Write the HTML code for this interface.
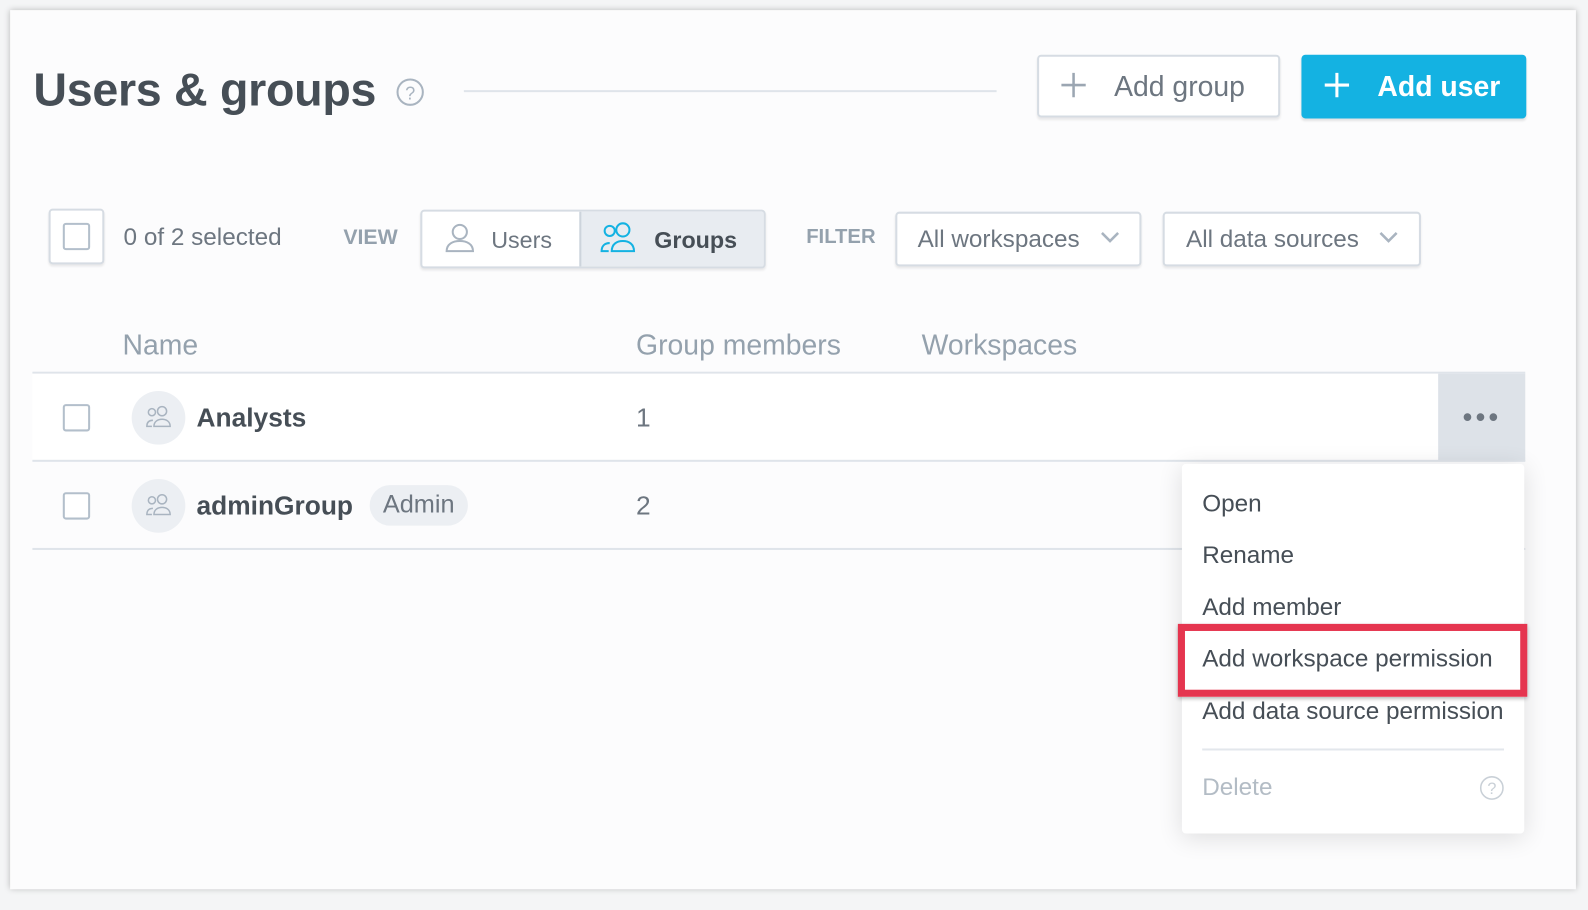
<!DOCTYPE html>
<html><head><style>
*{box-sizing:border-box;margin:0;padding:0}
body{width:1588px;height:898px;background:#f4f5f6;font-family:"Liberation Sans",sans-serif;position:relative;overflow:hidden;color:#464e56}
#w{position:absolute;left:0;top:0;width:1588px;height:898px;transform:scale(1.0128);transform-origin:0 0}
.frame{position:absolute;left:10px;top:10px;width:1546px;height:868px;background:#fcfcfd;box-shadow:0 0 6px rgba(0,0,0,.25)}
.a{position:absolute}
.t{position:absolute;white-space:nowrap}
.btn{position:absolute;border:2px solid #d6dce3;border-radius:4px;background:#fff;box-shadow:0 2px 2px rgba(0,0,0,.08)}
.cb{position:absolute;width:27px;height:27px;border:2px solid #b3bfcb;border-radius:3px;background:#fff}
.mi{position:absolute;left:1187px;font-size:24px;color:#464e56}
</style></head><body><div id="w">
<div class="frame"></div>
<div class="t" style="left:33px;top:61px;font-size:46px;font-weight:bold;color:#464e56;letter-spacing:-0.3px">Users &amp; groups</div>
<svg class="a" style="left:390px;top:76px" width="30" height="30"><circle cx="15" cy="15" r="12.5" fill="none" stroke="#a9b4c0" stroke-width="2"/><text x="15" y="22" text-anchor="middle" font-family="Liberation Sans" font-size="18" fill="#a9b4c0">?</text></svg>
<div class="a" style="left:458px;top:89px;width:526px;height:2px;background:#dfe4ea"></div>
<div class="btn" style="left:1024px;top:54px;width:240px;height:62px"></div>
<svg class="a" style="left:1036px;top:60px" width="48" height="48" stroke="#9ba6b2" stroke-width="2.5"><path d="M24 12v24M12 24h24"/></svg>
<div class="t" style="left:1100px;top:70px;font-size:28px;color:#6d7680">Add group</div>
<div class="a" style="left:1285px;top:54px;width:222px;height:63px;background:#14b2e2;border-radius:4px;box-shadow:0 2px 2px rgba(0,0,0,.1)"></div>
<svg class="a" style="left:1296px;top:60px" width="48" height="48" stroke="#fff" stroke-width="3"><path d="M24 12v24M12 24h24"/></svg>
<div class="t" style="left:1360px;top:70px;font-size:28px;font-weight:bold;color:#fff">Add user</div>

<div class="btn" style="left:48px;top:206px;width:55px;height:55px"></div>
<div class="cb" style="left:62px;top:220px"></div>
<div class="t" style="left:122px;top:221px;font-size:24px;color:#6d7680">0 of 2 selected</div>
<div class="t" style="left:339px;top:223px;font-size:21px;font-weight:bold;color:#94a1ad">VIEW</div>
<div class="btn" style="left:415px;top:207px;width:341px;height:58px;overflow:hidden"><div class="a" style="left:155px;top:0;width:186px;height:58px;background:#e8ecf1;border-left:2px solid #cdd4dc"></div></div>
<svg class="a" style="left:438px;top:219px" width="32" height="32" fill="none" stroke="#a9b4c0" stroke-width="2"><circle cx="16" cy="10" r="7"/><path d="M3 29c0-7 6-10 13-10s13 3 13 10z"/></svg>
<div class="t" style="left:485px;top:224px;font-size:23px;color:#6d7680">Users</div>
<svg class="a" style="left:592px;top:219px" width="38" height="32" fill="none" stroke="#14b2e2" stroke-width="2"><circle cx="10" cy="9" r="5"/><circle cx="23" cy="8" r="6.5"/><path d="M12 29c0-7 5-10 11-10s11 3 11 10z"/><path d="M9 29H2c0-5 3-8 8-8"/></svg>
<div class="t" style="left:646px;top:224px;font-size:23px;font-weight:bold;color:#464e56">Groups</div>
<div class="t" style="left:796px;top:223px;font-size:20px;font-weight:bold;color:#94a1ad">FILTER</div>
<div class="btn" style="left:884px;top:209px;width:243px;height:54px"></div>
<div class="t" style="left:906px;top:223px;font-size:24px;color:#6d7680">All workspaces</div>
<svg class="a" style="left:1086px;top:228px" width="20" height="14" fill="none" stroke="#a9b4c0" stroke-width="2.5"><path d="M2 2l8 8 8-8"/></svg>
<div class="btn" style="left:1148px;top:209px;width:255px;height:54px"></div>
<div class="t" style="left:1171px;top:223px;font-size:24px;color:#6d7680">All data sources</div>
<svg class="a" style="left:1361px;top:228px" width="20" height="14" fill="none" stroke="#a9b4c0" stroke-width="2.5"><path d="M2 2l8 8 8-8"/></svg>

<div class="t" style="left:121px;top:325px;font-size:28px;color:#94a1ad">Name</div>
<div class="t" style="left:628px;top:325px;font-size:28px;color:#94a1ad">Group members</div>
<div class="t" style="left:910px;top:325px;font-size:28px;color:#94a1ad">Workspaces</div>
<div class="a" style="left:32px;top:367px;width:1474px;height:2px;background:#dfe4ea"></div>
<div class="a" style="left:32px;top:369px;width:1388px;height:86px;background:#fff"></div>
<div class="a" style="left:1420px;top:369px;width:86px;height:86px;background:#dde2e8"></div>
<div class="t" style="left:1444px;top:396px;font-size:28px;color:#6d7680;letter-spacing:3px">•••</div>
<div class="a" style="left:32px;top:454px;width:1474px;height:2px;background:#dfe4ea"></div>
<div class="a" style="left:32px;top:541px;width:1474px;height:2px;background:#dfe4ea"></div>

<div class="cb" style="left:62px;top:399px"></div>
<div class="a" style="left:130px;top:386px;width:53px;height:53px;border-radius:50%;background:#eceff3"></div>
<svg class="a" style="left:142px;top:400px" width="30" height="24" fill="none" stroke="#a9b4c0" stroke-width="1.5"><circle cx="8" cy="7" r="3.5"/><circle cx="18" cy="6" r="4.5"/><path d="M10 21c0-5 4-7 8-7s8 2 8 7z"/><path d="M8 21H3c0-4 2-6 6-6"/></svg>
<div class="t" style="left:194px;top:397px;font-size:26px;font-weight:bold;color:#464e56">Analysts</div>
<div class="t" style="left:628px;top:397px;font-size:26px;color:#6d7680">1</div>

<div class="cb" style="left:62px;top:486px"></div>
<div class="a" style="left:130px;top:473px;width:53px;height:53px;border-radius:50%;background:#eceff3"></div>
<svg class="a" style="left:142px;top:487px" width="30" height="24" fill="none" stroke="#a9b4c0" stroke-width="1.5"><circle cx="8" cy="7" r="3.5"/><circle cx="18" cy="6" r="4.5"/><path d="M10 21c0-5 4-7 8-7s8 2 8 7z"/><path d="M8 21H3c0-4 2-6 6-6"/></svg>
<div class="t" style="left:194px;top:484px;font-size:26px;font-weight:bold;color:#464e56">adminGroup</div>
<div class="a" style="left:365px;top:479px;width:97px;height:40px;border-radius:20px;background:#eceff3"></div>
<div class="t" style="left:378px;top:484px;font-size:25px;color:#6d7680">Admin</div>
<div class="t" style="left:628px;top:484px;font-size:26px;color:#6d7680">2</div>

<div class="a" style="left:1167px;top:458px;width:338px;height:365px;background:#fff;border-radius:4px;box-shadow:0 4px 24px rgba(0,0,0,.12)"></div>
<div class="mi" style="top:484px">Open</div>
<div class="mi" style="top:535px">Rename</div>
<div class="mi" style="top:586px">Add member</div>
<div class="a" style="left:1163px;top:616px;width:345px;height:72px;border:7px solid #e5354f;box-shadow:0 2px 4px rgba(0,0,0,.3)"></div>
<div class="mi" style="top:637px">Add workspace permission</div>
<div class="mi" style="top:689px">Add data source permission</div>
<div class="a" style="left:1187px;top:739px;width:298px;height:2px;background:#e3e7ec"></div>
<div class="mi" style="top:764px;color:#b3bcc5">Delete</div>
<svg class="a" style="left:1460px;top:765px" width="26" height="26"><circle cx="13" cy="13" r="11" fill="none" stroke="#c9d0d7" stroke-width="1.5"/><text x="13" y="19" text-anchor="middle" font-family="Liberation Sans" font-size="16" fill="#c9d0d7">?</text></svg>
</div></body></html>
